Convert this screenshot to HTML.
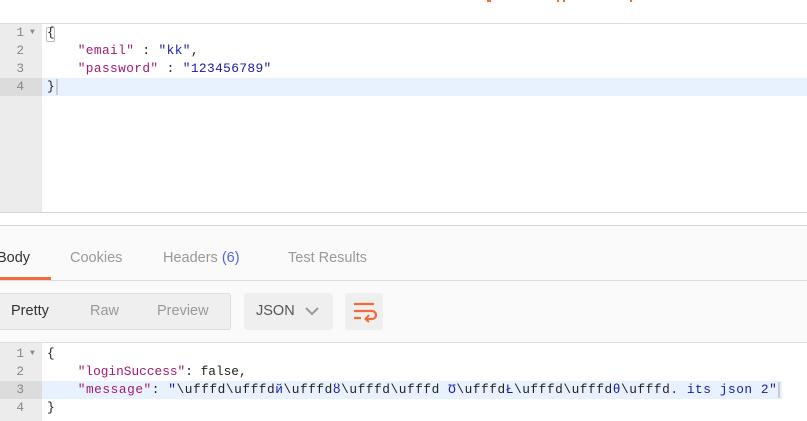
<!DOCTYPE html>
<html><head><style>
*{margin:0;padding:0;box-sizing:border-box}
body{width:807px;height:421px;overflow:hidden;background:#fff;position:relative;font-family:"Liberation Sans",sans-serif}
.abs{position:absolute}
.mono{font-family:"Liberation Mono",monospace;font-size:12.8px;line-height:18px}
.row{position:relative;height:18px;white-space:pre}
.ln{position:absolute;left:0;width:42px;text-align:right;padding-right:18px;color:#888;}
.k{color:#a31a6f}.s{color:#1a1aa6}.d{color:#222}
</style></head><body>
<div class="abs" style="left:487px;top:0;width:4px;height:2px;background:#f26b3a"></div>
<div class="abs" style="left:557px;top:0;width:2px;height:2px;background:#f26b3a"></div>
<div class="abs" style="left:563px;top:0;width:2px;height:2px;background:#f26b3a"></div>
<div class="abs" style="left:630px;top:0;width:2px;height:2px;background:#f26b3a"></div>
<div class="abs" style="left:0;top:23px;width:807px;height:1px;background:#ddd"></div>
<div class="abs" style="left:0;top:24px;width:42px;height:188px;background:#ececec"></div>
<div class="abs" style="left:0;top:78px;width:42px;height:18px;background:#dcdcdc"></div>
<div class="abs" style="left:42px;top:78px;width:765px;height:18px;background:#e8f2fe"></div>
<div class="abs" style="left:46px;top:27px;width:9px;height:15px;border:1px solid #bbb;border-radius:2px"></div>
<div class="abs mono" style="left:0;top:24px;width:807px"><div class="row"><span class="ln">1</span><span class="abs" style="left:30px;top:0;color:#888;font-size:8px">▼</span><span class="abs d" style="left:47px">{</span></div><div class="row"><span class="ln">2</span><span class="abs" style="left:47px">    <span style="letter-spacing:0.4px"><span class="k">"email"</span><span class="d"> : </span><span class="s">"kk"</span><span class="d">,</span></span></span></div><div class="row"><span class="ln">3</span><span class="abs" style="left:47px">    <span style="letter-spacing:0.4px"><span class="k">"password"</span><span class="d"> : </span><span class="s">"123456789"</span></span></span></div><div class="row"><span class="ln">4</span><span class="abs d" style="left:47px">}</span><span class="abs" style="left:56px;top:1px;width:2px;height:16px;background:#ccc"></span></div></div>
<div class="abs" style="left:0;top:212px;width:807px;height:1px;background:#d4d4d4"></div>
<div class="abs" style="left:0;top:225px;width:807px;height:1px;background:#d4d4d4"></div>
<div class="abs" style="left:0;top:226px;width:807px;height:116px;background:#fafafa"></div>
<div class="abs" style="left:0;top:280px;width:807px;height:1px;background:#ddd"></div>
<div class="abs" style="left:0;top:277px;width:51px;height:3px;background:#f26b3a"></div>
<div class="abs" style="left:-3px;top:250px;font-size:14.5px;color:#333">Body</div>
<div class="abs" style="left:70px;top:250px;font-size:14.5px;color:#999">Cookies</div>
<div class="abs" style="left:163px;top:250px;font-size:14.5px;color:#999">Headers <span style="color:#5563d6">(6)</span></div>
<div class="abs" style="left:288px;top:250px;font-size:14.5px;color:#999">Test Results</div>
<div class="abs" style="left:-4px;top:293px;width:235px;height:37px;background:#efefef;border:1px solid #ddd;border-radius:3px"></div>
<div class="abs" style="left:11px;top:303px;font-size:14.5px;color:#333">Pretty</div>
<div class="abs" style="left:90px;top:303px;font-size:14.5px;color:#999">Raw</div>
<div class="abs" style="left:157px;top:303px;font-size:14.5px;color:#999">Preview</div>
<div class="abs" style="left:244px;top:293px;width:89px;height:37px;background:#efefef;border-radius:3px"></div>
<div class="abs" style="left:256px;top:303px;font-size:14.5px;color:#555">JSON</div>
<svg class="abs" style="left:304px;top:306px" width="16" height="10"><path d="M2 2 L8 8 L14 2" fill="none" stroke="#999" stroke-width="2"/></svg>
<div class="abs" style="left:345px;top:293px;width:38px;height:37px;background:#efefef;border-radius:3px"></div>
<svg class="abs" style="left:353px;top:301px" width="24" height="22"><path d="M1 3H21M1 10H19a4 4 0 0 1 0 8H13M1 17H8" fill="none" stroke="#f26b3a" stroke-width="2.2"/><path d="M16 14 L12.5 18 L16 21" fill="none" stroke="#f26b3a" stroke-width="2"/></svg>
<div class="abs" style="left:0;top:342px;width:807px;height:1px;background:#ddd"></div>
<div class="abs" style="left:0;top:343px;width:42px;height:78px;background:#ececec"></div>
<div class="abs" style="left:0;top:381px;width:42px;height:18px;background:#dcdcdc"></div>
<div class="abs" style="left:42px;top:381px;width:740px;height:18px;background:#e8f2fe"></div>
<div class="abs mono" style="left:0;top:345px;width:807px"><div class="row"><span class="ln">1</span><span class="abs" style="left:30px;top:0;color:#888;font-size:8px">▼</span><span class="abs d" style="left:47px">{</span></div><div class="row"><span class="ln">2</span><span class="abs" style="left:47px">    <span class="k">"loginSuccess"</span><span class="d">: false,</span></span></div><div class="row"><span class="ln">3</span><span class="abs" style="left:47px">    <span style="letter-spacing:0.55px"><span class="k">"message"</span><span class="d">: </span><span class="s">"</span><span class="d">\ufffd\ufffd</span><span class="s">й</span><span class="d">\ufffd</span><span class="s">ȣ</span><span class="d">\ufffd\ufffd </span><span class="s">Ʊ</span><span class="d">\ufffd</span><span class="s">Ł</span><span class="d">\ufffd\ufffd</span><span class="s">θ</span><span class="d">\ufffd</span><span class="s">. its json 2"</span></span></span><span class="abs" style="left:778px;top:1px;width:2px;height:16px;background:#ccc"></span></div><div class="row"><span class="ln">4</span><span class="abs d" style="left:47px">}</span></div></div>
</body></html>
